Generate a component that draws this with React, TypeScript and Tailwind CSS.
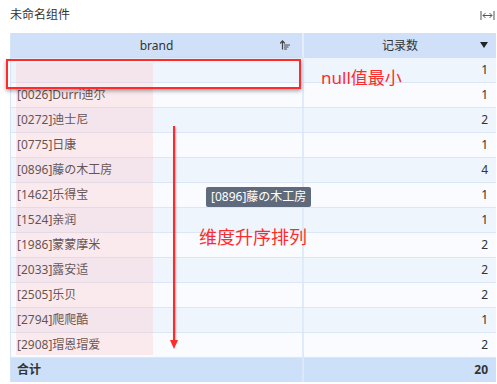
import { ArrowUpWideNarrow } from 'lucide-react'

const rows: [string, number][] = [
  ['', 1],
  ['[0026]Durri迪尔', 1],
  ['[0272]迪士尼', 2],
  ['[0775]日康', 1],
  ['[0896]藤の木工房', 4],
  ['[1462]乐得宝', 1],
  ['[1524]亲润', 1],
  ['[1986]蒙蒙摩米', 2],
  ['[2033]露安适', 2],
  ['[2505]乐贝', 2],
  ['[2794]爬爬酷', 1],
  ['[2908]瑁恩瑁爱', 2],
]

const font = { fontFamily: '"Noto Sans", "Noto Sans CJK SC", sans-serif' }

export default function App() {
  return (
    <div className="relative w-[497px] h-[384px] bg-white overflow-hidden text-[#333]" style={font}>
      {/* Title bar */}
      <div className="flex items-center justify-between h-[33px] pl-[10px] pr-[2px] pb-[3px]">
        <span className="text-[12px] leading-none">未命名组件</span>
        <svg width="15" height="11" viewBox="0 0 15 11" className="text-[#555]">
          <path d="M1 1v9M14 1v9" stroke="currentColor" strokeWidth="1" />
          <path d="M3 5.5h9M5.5 3L3 5.5l2.5 2.5M9.5 3l2.5 2.5-2.5 2.5" stroke="currentColor" strokeWidth="1" fill="none" />
        </svg>
      </div>

      {/* Table */}
      <div className="ml-[10px] w-[486px] border-l border-[#d6e4f6] text-[12px]">
        <div className="flex h-[25px] bg-[#cfe0f8]">
          <div className="relative w-[291px] flex items-center justify-center">
            brand
            <ArrowUpWideNarrow size={12} strokeWidth={2.4} className="absolute right-[11px] top-[6px] text-[#444]" />
          </div>
          <div className="w-[2px] bg-[#e3edfb]" />
          <div className="relative flex-1 flex items-center justify-center">
            记录数
            <span className="absolute right-[8px] top-[9px] w-0 h-0 border-l-[4px] border-r-[4px] border-t-[6px] border-l-transparent border-r-transparent border-t-[#222]" />
          </div>
        </div>
        {rows.map(([name, n], i) => (
          <div key={i} className={`flex h-[25px] border-b border-[#dbe7f7] ${i % 2 === 0 ? 'bg-[#eff5fd]' : 'bg-[#f9fbff]'}`}>
            <div className="w-[291px] flex items-center pl-[6px] whitespace-nowrap">{name}</div>
            <div className="w-[2px] bg-[#e0ebfa]" />
            <div className="flex-1 flex items-center justify-end pr-[8px]">{n}</div>
          </div>
        ))}
        <div className="flex h-[24px] bg-[#cde0f9] font-bold">
          <div className="w-[291px] flex items-center pl-[6px]">合计</div>
          <div className="w-[2px] bg-[#dce8fa]" />
          <div className="flex-1 flex items-center justify-end pr-[8px]">20</div>
        </div>
      </div>

      {/* Annotations */}
      <div className="absolute left-[16px] top-[63px] w-[137px] h-[292px] bg-[#ffb8b8]/25 pointer-events-none" />
      <div className="absolute left-[6px] top-[59px] w-[295px] h-[30px] border-2 border-[#ff2b2b] shadow-[0_2px_4px_rgba(0,0,0,0.35)]" />
      <div className="absolute left-[321px] top-[69px] text-[17px] leading-none text-[#ff2b2b]">null值最小</div>
      <div className="absolute left-[173px] top-[126px] w-[2px] h-[214px] bg-[#ff2b2b] shadow-[1px_1px_2px_rgba(0,0,0,0.3)]" />
      <div className="absolute left-[170px] top-[340px] w-0 h-0 border-l-[4px] border-r-[4px] border-t-[9px] border-l-transparent border-r-transparent border-t-[#ff2b2b]" />
      <div className="absolute left-[199px] top-[228px] text-[18px] leading-none text-[#ff2b2b]">维度升序排列</div>
      <div className="absolute left-[206px] top-[187px] h-[20px] px-[5px] flex items-center rounded-[2px] bg-[#5f6b7c] text-white text-[12px] whitespace-nowrap">
        [0896]藤の木工房
      </div>
    </div>
  )
}
